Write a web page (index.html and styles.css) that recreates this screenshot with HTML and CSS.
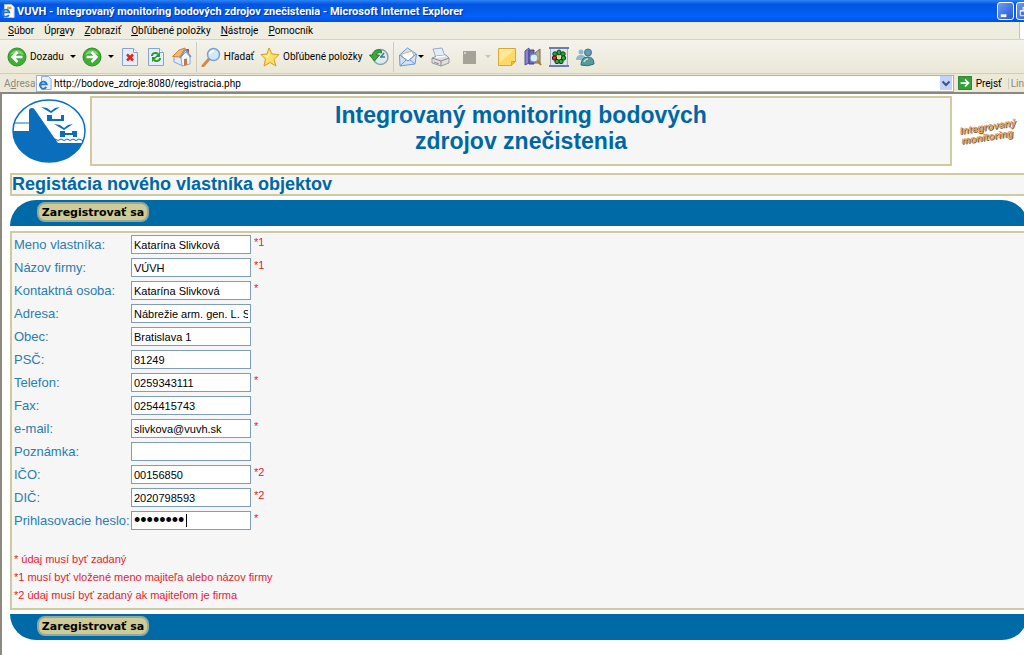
FILE: index.html
```
<!DOCTYPE html>
<html lang="sk">
<head>
    <meta charset="UTF-8">
    <meta name="viewport" content="width=device-width, initial-scale=1.0">
    <title>VUVH - Integrovaný monitoring bodových zdrojov znečistenia</title>
    <link rel="stylesheet" href="styles.css">
</head>
<body>
    <header class="titlebar">
        <svg class="small-icon" viewBox="0 0 16 16"><path d="M4 0.5h8l3 3v12H4z" fill="#fff" stroke="#b9cfee"/><path d="M7 3h5v3H7z" fill="#e9a23b"/><path d="M9 12.500A4 4 0 1 1 9.500 9.500H2" fill="none" stroke="#2878d0" stroke-width="2"/></svg>
        <span class="window-title">VUVH - Integrovaný monitoring bodových zdrojov znečistenia - Microsoft Internet Explorer</span>
        <button class="window-btn" type="button" aria-label="Minimalizovať"><svg viewBox="0 0 16 16"><rect x="3" y="11" width="6" height="3" fill="#fff"/></svg></button>
        <button class="window-btn" type="button" aria-label="Obnoviť"><svg viewBox="0 0 16 16"><path d="M3.500 7.500h6v5h-6zM3 7h7M6.500 7V3.500h6v6H10M6 4h7" fill="none" stroke="#fff"/></svg></button>
    </header>

    <nav class="menubar">
        <button type="button"><u>S</u>úbor</button>
        <button type="button">Úpr<u>a</u>vy</button>
        <button type="button"><u>Z</u>obraziť</button>
        <button type="button"><u>O</u>bľúbené položky</button>
        <button type="button"><u>N</u>ástroje</button>
        <button type="button"><u>P</u>omocník</button>
        <span class="throbber"></span>
    </nav>

    <div class="toolbar">
        <button class="tool" type="button">
            <svg viewBox="0 0 20 20"><circle cx="10" cy="10" r="9" fill="#3fae35" stroke="#2f8f28"/><path d="M3 8a7.500 7.500 0 0 1 14 0q-7-3-14 0z" fill="#83d077"/><path d="M15.500 10H6M10.500 5l-5 5 5 5" fill="none" stroke="#fff" stroke-width="2.500"/></svg>
            <span>Dozadu</span>
            <i class="arrow"></i>
        </button>
        <button class="tool" type="button" aria-label="Dopredu">
            <svg viewBox="0 0 20 20"><circle cx="10" cy="10" r="9" fill="#3fae35" stroke="#2f8f28"/><path d="M3 8a7.500 7.500 0 0 1 14 0q-7-3-14 0z" fill="#83d077"/><path d="M4.500 10H14M9.500 5l5 5-5 5" fill="none" stroke="#fff" stroke-width="2.500"/></svg>
            <i class="arrow"></i>
        </button>
        <button class="tool" type="button" aria-label="Zastaviť">
            <svg viewBox="0 0 20 20"><path d="M2.500 1.500h11l4 4v13h-15z" fill="#e4eefc" stroke="#86a3d3"/><path d="M13.500 1.500v4h4" fill="#fff" stroke="#86a3d3"/><path d="M7 7.500l6 6M13 7.500l-6 6" stroke="#dc2a1c" stroke-width="2.500"/></svg>
        </button>
        <button class="tool" type="button" aria-label="Obnoviť stránku">
            <svg viewBox="0 0 20 20"><path d="M2.500 1.500h11l4 4v13h-15z" fill="#e4eefc" stroke="#86a3d3"/><path d="M13.500 1.500v4h4" fill="#fff" stroke="#86a3d3"/><path d="M6 9c0-3 4-4 6-2M14 11c0 3-4 4-6 2" fill="none" stroke="#2a9a2e" stroke-width="2"/><path d="M14 5v5H9zM6 15v-5h5z" fill="#2a9a2e"/></svg>
        </button>
        <button class="tool" type="button" aria-label="Domov">
            <svg viewBox="0 0 20 20"><path d="M14 2h3v5l-3-3z" fill="#c4502c"/><path d="M2 9l5 0 4 3v7l-9-4z" fill="#dfeafb" stroke="#8aa5d4"/><path d="M9 10l5-5 4 5v7l-8 2z" fill="#f4f8ff" stroke="#8aa5d4"/><path d="M0.500 9.500L7 3l6-2-5 9z" fill="#f7b566" stroke="#d5853a"/><path d="M8 11l5.500-8.500L19 10" fill="none" stroke="#7f93bd" stroke-width="1.500"/><path d="M12 12l3-.5V18l-3 .7z" fill="#c8783f"/></svg>
        </button>
        <span class="separator"></span>
        <button class="tool" type="button">
            <svg viewBox="0 0 20 20"><path d="M8 12l-6 7" stroke="#d08a4c" stroke-width="3" stroke-linecap="round"/><circle cx="12.500" cy="7.500" r="6" fill="#cfe8fb" stroke="#7c9fd2" stroke-width="1.500"/><path d="M9 7q1-3 4-3" fill="none" stroke="#fff" stroke-width="2"/></svg>
            <span>Hľadať</span>
        </button>
        <button class="tool" type="button">
            <svg viewBox="0 0 20 20"><path d="M9 1l3 6 7 .5-5 5 2 6.500-6-3.500L4 19l1.500-7L1 7.500 7 7z" fill="#fde06a" stroke="#d99b1e"/><path d="M9 4l1 5-6-1 4 3z" fill="#fff8c4"/></svg>
            <span>Obľúbené položky</span>
        </button>
        <button class="tool" type="button" aria-label="História">
            <svg viewBox="0 0 20 20"><circle cx="11.500" cy="10" r="7.500" fill="#dcebf2" stroke="#8e9fae" stroke-width="1.500"/><path d="M11.500 10.500L15 6M11 10h5" stroke="#4f7391" stroke-width="1.500"/><path d="M12 3C7 2 4 4 3.500 8H0.500l5 6 5-6H7.500c0-2 2-3 5-2z" fill="#39a842" stroke="#217c2c"/></svg>
        </button>
        <span class="separator"></span>
        <button class="tool mail" type="button" aria-label="Pošta">
            <svg viewBox="0 0 20 20"><path d="M1.500 8l8-7 9 6-1.500 10-15 2z" fill="#cfe2fa" stroke="#6f97d0"/><path d="M4 7l10-3 2 5-6 5-6-4z" fill="#fff" stroke="#e7b06d"/><path d="M2 8l8 6 8-7M2 19l6-6M17 17l-5-4" fill="none" stroke="#6f97d0"/></svg>
            <i class="arrow"></i>
        </button>
        <button class="tool" type="button" aria-label="Tlačiť">
            <svg viewBox="0 0 20 20"><path d="M3 2l9-1 3 8-9 2z" fill="#e1edfb" stroke="#94acd0"/><path d="M2 11l5-2 9-1 3 3v5l-8 3-9-3z" fill="#dedede" stroke="#9a9aa0"/><path d="M2 11l9 3 8-3M11 14v5M4 15l5 2" fill="none" stroke="#85878f"/><path d="M6 10l9-1" stroke="#fff" stroke-width="1.500"/></svg>
        </button>
        <button class="tool edit" type="button" aria-label="Upraviť" disabled>
            <svg viewBox="0 0 20 20"><path d="M4 4h13v13H4z" fill="#a5a398"/><path d="M5 5h2v2H5z" fill="#d8d6ca"/></svg>
            <i class="arrow"></i>
        </button>
        <button class="tool" type="button" aria-label="Diskusia">
            <svg viewBox="0 0 20 20"><path d="M1.500 1.500h17v13l-4 4h-13z" fill="#fdd968" stroke="#d9a63a"/><path d="M2 2h16L2 16z" fill="#fee998"/><path d="M18.500 14.500h-4v4" fill="#f2b73d" stroke="#d9a63a"/></svg>
        </button>
        <button class="tool" type="button" aria-label="Zdroje informácií">
            <svg viewBox="0 0 20 20"><path d="M2 4l4-3v15l-4 2z" fill="#8c83cf" stroke="#5751a0"/><path d="M6 3h5v14H6z" fill="#6f68b8" stroke="#474188"/><path d="M12 6l5-4v14h-5z" fill="#b5ad82" stroke="#716c4e"/><path d="M14 13l4 5" stroke="#b3752f" stroke-width="2"/><circle cx="11" cy="11" r="4" fill="#d9edfb" stroke="#7792b5"/></svg>
        </button>
        <button class="tool" type="button" aria-label="ICQ">
            <svg viewBox="0 0 20 20"><path d="M1 0h18v20H1z" fill="#dfe4f1"/><path d="M0 1h20M0 19h20" stroke="#6c7cae" stroke-width="2"/><path d="M1.500 2v16M18.500 2v16" stroke="#a4aecb"/><g fill="#2fa535" stroke="#0b3f13"><ellipse cx="10" cy="5.500" rx="2" ry="2.500"/><circle cx="14" cy="7" r="2.200"/><circle cx="14.500" cy="11" r="2.200"/><circle cx="12" cy="14.500" r="2.200"/><circle cx="8" cy="14.500" r="2.200"/><circle cx="6" cy="7" r="2.200"/></g><circle cx="5.500" cy="11" r="2.200" fill="#d62f25" stroke="#3c1010"/><circle cx="10" cy="10" r="1.500" fill="#e8e146"/></svg>
        </button>
        <button class="tool" type="button" aria-label="Messenger">
            <svg viewBox="0 0 20 20"><circle cx="6" cy="5" r="2.500" fill="#8bbac9"/><path d="M1 13q0-5 5-5t5 5z" fill="#8bbac9"/><circle cx="13" cy="5.500" r="3.500" fill="#5f9fae" stroke="#3d7184"/><path d="M6 18q0-8 7-8 6 0 6 7-6 3-13 1z" fill="#579a9c" stroke="#34697d"/><path d="M9 15q1-3 4-3" fill="none" stroke="#b6dcdc" stroke-width="1.500"/></svg>
        </button>
    </div>

    <form class="addressbar">
        <label for="url">A<u>d</u>resa</label>
        <div class="url-box">
            <svg class="small-icon" viewBox="0 0 16 16"><path d="M4 0.5h8l3 3v12H4z" fill="#e6f0fd" stroke="#7fa3dc"/><path d="M9.500 12.500A4 4 0 1 1 10 9.500H2" fill="none" stroke="#2878d0" stroke-width="2"/></svg>
            <input id="url" type="text" value="http://bodove_zdroje:8080/registracia.php">
            <button class="dropdown" type="button" aria-label="Zobraziť adresy"><svg viewBox="0 0 12 14"><path d="M2.500 5.500L6 9l3.500-3.500" fill="none" stroke="#3f5482" stroke-width="2"/></svg></button>
        </div>
        <button class="go" type="button">
            <svg class="small-icon" viewBox="0 0 16 16"><path d="M0.500 0.500h15v15H.500z" fill="#35a03a" stroke="#1f7a28"/><path d="M3 8h9M8 4l4 4-4 4" fill="none" stroke="#fff" stroke-width="2"/></svg>
            Prejsť
        </button>
        <span class="links">Lin</span>
    </form>

    <main class="page">
        <div class="banner">
            <svg class="logo" viewBox="0 0 76 64">
                <clipPath id="disc"><ellipse cx="38" cy="32" rx="36" ry="31"/></clipPath>
                <ellipse cx="38" cy="32" rx="36" ry="31" fill="#fff"/>
                <g clip-path="url(#disc)">
                    <path d="M0 32h18V12q0-3 3-3 2 0 3 2l18 26 5 7h29v20H0z" fill="#0a6ebd"/>
                    <path d="M0 24h18M44 40q3 3 6 0 3 3 6 0 3 3 6 0 3 3 6 0 3 3 8 0" fill="none" stroke="#0a6ebd"/>
                    <path d="M30 8l6 1 4 3 4-3 5-1-9 6zM43 25l6 1 4 3 4-3 5-1-9 6z" fill="#0a6ebd"/>
                    <path d="M36 16h5v4h9v-4h3v6H36zM49 32h5v2h7v-2h5v6h-4v-2h-8v2h-5z" fill="#0a6ebd"/>
                </g>
                <ellipse cx="38" cy="32" rx="36" ry="31" fill="none" stroke="#0a6ebd" stroke-width="1.500"/>
            </svg>
            <h1>Integrovaný monitoring bodových<br>zdrojov znečistenia</h1>
            <svg class="word-logo" viewBox="0 0 64 40">
                <g transform="rotate(-9 32 20)" class="word-shadow">
                    <text x="5" y="20">Integrovaný</text>
                    <text x="5" y="30">monitoring</text>
                </g>
                <g transform="rotate(-9 32 20)" class="word-face">
                    <text x="4" y="19">Integrovaný</text>
                    <text x="4" y="29">monitoring</text>
                </g>
            </svg>
        </div>

        <h2>Registácia nového vlastníka objektov</h2>

        <div class="bar bar-top">
            <button class="register" type="submit" form="owner-form">Zaregistrovať sa</button>
        </div>

        <form id="owner-form" class="owner-form">
            <div class="row"><label for="owner">Meno vlastníka:</label><input type="text" id="owner" value="Katarína Slivková"><span class="mark">*1</span></div>
            <div class="row"><label for="company">Názov firmy:</label><input type="text" id="company" value="VÚVH"><span class="mark">*1</span></div>
            <div class="row"><label for="contact">Kontaktná osoba:</label><input type="text" id="contact" value="Katarína Slivková"><span class="mark">*</span></div>
            <div class="row"><label for="address">Adresa:</label><input type="text" id="address" value="Nábrežie arm. gen. L. Svobodu 5"></div>
            <div class="row"><label for="city">Obec:</label><input type="text" id="city" value="Bratislava 1"></div>
            <div class="row"><label for="zip">PSČ:</label><input type="text" id="zip" value="81249"></div>
            <div class="row"><label for="phone">Telefon:</label><input type="text" id="phone" value="0259343111"><span class="mark">*</span></div>
            <div class="row"><label for="fax">Fax:</label><input type="text" id="fax" value="0254415743"></div>
            <div class="row"><label for="email">e-mail:</label><input type="text" id="email" value="slivkova@vuvh.sk"><span class="mark">*</span></div>
            <div class="row"><label for="note">Poznámka:</label><input type="text" id="note"></div>
            <div class="row"><label for="ico">IČO:</label><input type="text" id="ico" value="00156850"><span class="mark">*2</span></div>
            <div class="row"><label for="dic">DIČ:</label><input type="text" id="dic" value="2020798593"><span class="mark">*2</span></div>
            <div class="row password"><label for="password">Prihlasovacie heslo:</label><input type="password" id="password" value="heslo123"><span class="mark">*</span></div>

            <div class="notes">
                <p>* údaj musí byť zadaný</p>
                <p>*1 musí byť vložené meno majiteľa alebo názov firmy</p>
                <p>*2 údaj musí byť zadaný ak majiteľom je firma</p>
            </div>
        </form>

        <div class="bar bar-bottom">
            <button class="register" type="submit" form="owner-form">Zaregistrovať sa</button>
        </div>
    </main>
</body>
</html>
```
FILE: styles.css
```
* {
    box-sizing: border-box;
}

body {
    margin: 0;
    min-height: 100vh;
    display: flex;
    flex-direction: column;
    overflow: hidden;
    background-color: white;
    font-family: Roboto, sans-serif;
    font-size: 10px;
    color: #000;
}

button, input {
    font-family: inherit;
    font-size: inherit;
    color: inherit;
    margin: 0;
    padding: 0;
    border: none;
    background: none;
}

input:focus {
    outline: none;
}

svg {
    display: block;
    flex: none;
}

.small-icon {
    width: 14px;
    height: 14px;
}

/* browser window */

.titlebar {
    display: flex;
    align-items: center;
    gap: 2px;
    height: 22px;
    padding-left: 1px;
    overflow: hidden;
    background: linear-gradient(#2b84f5, #0355e0 20%, #0260fb 75%, #0450d4);
    color: white;
}

.window-title {
    flex: 1;
    font-size: 11px;
    font-weight: bold;
    white-space: nowrap;
    text-shadow: 1px 1px 1px #0a2f87;
}

.window-btn {
    flex: none;
    width: 17px;
    height: 18px;
    border: 1px solid white;
    border-radius: 3px;
    background: linear-gradient(135deg, #6c9bf4, #2257d8);
}

.window-btn:last-child {
    margin-right: -9px;
}

.menubar {
    display: flex;
    align-items: center;
    gap: 10px;
    height: 18px;
    padding-left: 8px;
    background-color: #efede0;
    border-bottom: 1px solid #d6d2c0;
}

.throbber {
    width: 5px;
    height: 17px;
    margin-left: auto;
    border-left: 1px solid #c6c3b3;
    background-color: white;
}

.toolbar {
    display: flex;
    align-items: center;
    gap: 6px;
    height: 34px;
    padding-left: 7px;
    background: linear-gradient(#f4f3ec, #ebe8d7);
    border-bottom: 1px solid #d0cdbf;
}

.tool {
    display: flex;
    align-items: center;
    gap: 3px;
    white-space: nowrap;
}

.tool svg {
    width: 20px;
    height: 20px;
}

.arrow {
    margin-left: 3px;
    border: 3px solid transparent;
    border-top-color: black;
    border-bottom: none;
}

.mail {
    gap: 0;
}

.mail .arrow {
    margin-left: 0;
}

.edit {
    margin-left: 3px;
}

.edit .arrow {
    border-top-color: #c5c2b4;
}

.separator {
    width: 1px;
    height: 30px;
    margin: 0 -2px;
    background-color: #cfccbe;
}

.addressbar {
    display: flex;
    align-items: center;
    height: 18px;
    overflow: hidden;
    background-color: #ece9d8;
}

.addressbar label {
    width: 36px;
    padding-left: 4px;
    color: #8b897d;
}

.url-box {
    flex: 1;
    display: flex;
    align-items: center;
    gap: 2px;
    height: 17px;
    padding: 0 1px;
    border: 1px solid #9db1c9;
    background-color: white;
}

.url-box input {
    flex: 1;
}

.dropdown {
    width: 12px;
    height: 14px;
    background-color: #c3d3fb;
}

.go {
    display: flex;
    align-items: center;
    gap: 4px;
    width: 54px;
    padding-left: 4px;
}

.links {
    padding-left: 2px;
    border-left: 1px solid #cfccbe;
    color: #8b897d;
}

/* page */

.page {
    flex: 1;
    padding: 2px 0 0 8px;
    border-top: 2px solid #8b897d;
    border-left: 2px solid #8b897d;
    font-family: "Liberation Sans", Arial, sans-serif;
    color: #0067a5;
}

.banner {
    display: flex;
    align-items: center;
    height: 70px;
}

.logo {
    width: 76px;
    height: 64px;
    margin-left: 1px;
}

.banner h1 {
    flex: 1;
    height: 70px;
    margin: 0 0 0 3px;
    padding-top: 4px;
    border: 2px solid #cfcb9f;
    background-color: #f6f6f6;
    font-size: 23px;
    line-height: 26px;
    text-align: center;
}

.word-logo {
    width: 64px;
    height: 40px;
    margin: 0 4px;
    font-size: 10px;
    font-weight: bold;
    font-style: italic;
}

.word-shadow {
    fill: #7a5a35;
}

.word-face {
    fill: #d9a066;
}

.page h2 {
    height: 23px;
    margin: 7px 0 4px;
    border: 2px solid #cfcb9f;
    border-right: none;
    background-color: #f6f6f6;
    font-size: 18px;
    line-height: 19px;
}

.bar {
    height: 26px;
    margin-right: -4px;
    padding: 2px 27px;
    background-color: #006aa6;
}

.bar-top {
    border-radius: 26px 26px 0 0;
}

.bar-bottom {
    border-radius: 0 0 26px 26px;
}

.register {
    width: 112px;
    height: 20px;
    border: 2px solid #8fa99f;
    border-radius: 8px;
    background-color: #cfcb97;
    color: black;
    font-family: "DejaVu Sans", Verdana, sans-serif;
    font-size: 11px;
    font-weight: bold;
    white-space: nowrap;
}

.owner-form {
    margin: 5px 0 4px;
    padding: 0 0 4px 2px;
    border: 2px solid #cfcb9f;
    border-right: none;
    background-color: #f6f6f6;
}

.row {
    display: flex;
    align-items: center;
    height: 23px;
}

.row label {
    width: 117px;
    font-size: 13px;
    white-space: nowrap;
    color: #2a7cb0;
}

.row input {
    width: 120px;
    height: 19px;
    padding: 0 2px;
    border: 1px solid #7f9db9;
    background-color: white;
    color: black;
    font-size: 11px;
}

.password {
    position: relative;
}

.password input {
    font-size: 18px;
}

/* text cursor */
.password::after {
    content: "";
    position: absolute;
    left: 172px;
    top: 5px;
    width: 1px;
    height: 13px;
    background-color: black;
}

.mark {
    align-self: flex-start;
    margin-left: 3px;
    font-size: 11px;
    line-height: 18px;
    color: #e3232f;
}

.notes {
    margin-top: 18px;
    font-size: 11px;
    line-height: 18px;
    color: #e3232f;
}

.notes p {
    margin: 0;
}
```
